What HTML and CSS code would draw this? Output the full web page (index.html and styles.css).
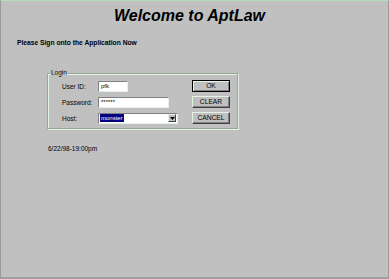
FILE: index.html
```html
<!DOCTYPE html>
<html lang="en">
  <head>
    <meta charset="UTF-8" />
    <title>Welcome to AptLaw</title>
    <link rel="stylesheet" href="styles.css">
  </head>
  <body>
    <div class="screen">
      <h1 class="title">Welcome to AptLaw</h1>
      <p class="prompt">Please Sign onto the Application Now</p>

      <fieldset class="login">
        <legend>Login</legend>
        <div class="login-grid">
          <label>User ID:</label>
          <span class="field field-user">pfk</span>
          <span class="btn btn-default">OK</span>

          <label>Password:</label>
          <span class="field field-pass">******</span>
          <span class="btn">CLEAR</span>

          <label>Host:</label>
          <span class="field combo">
            <span class="combo-value">monster</span>
            <span class="combo-arrow">
              <svg width="5" height="3" viewBox="0 0 5 3"><path d="M0 0h5L2.5 3z" fill="#000"/></svg>
            </span>
          </span>
          <span class="btn">CANCEL</span>
        </div>
      </fieldset>

      <p class="stamp">6/22/98-19:00pm</p>
    </div>
  </body>
</html>
```

FILE: styles.css
```css
* {
  box-sizing: border-box;
  margin: 0;
  padding: 0;
}

body {
  background: #c0c0c0;
  font-family: "Liberation Sans", Arial, sans-serif;
  color: #000;
}

.screen {
  width: 389px;
  height: 279px;
  background: #c0c0c0;
  border-top: 1px solid #b4dcb4;
  border-left: 1px solid #9a9a9a;
  border-right: 1px solid #9a9a9a;
  border-bottom: 2px solid #a0a0a0;
  padding-top: 6px;
}

.title {
  font-size: 16px;
  line-height: 18px;
  font-weight: bold;
  font-style: italic;
  text-align: center;
  padding-right: 10px;
}

.prompt {
  margin: 14px 0 0 16px;
  font-size: 6.7px;
  line-height: 8px;
  font-weight: bold;
}

.login {
  margin: 22px 0 0 46px;
  width: 191px;
  padding: 3px 0 4px 0;
  border: 1px solid #98a898;
  box-shadow: 1px 1px 0 #e4f2e4, inset 1px 1px 0 #e4f2e4;
}

.login legend {
  margin-left: 2px;
  padding: 0 1px;
  font-size: 6.5px;
  line-height: 8px;
}

.login-grid {
  display: grid;
  grid-template-columns: 36px 94px 38px;
  grid-auto-rows: 12px;
  row-gap: 4px;
  align-items: center;
  margin-left: 14px;
  font-size: 6.5px;
}

.field {
  height: 11px;
  background: #fff;
  border-top: 1px solid #808080;
  border-left: 1px solid #808080;
  border-right: 1px solid #e4f2e4;
  border-bottom: 1px solid #e4f2e4;
  line-height: 9px;
  padding-left: 2px;
  font-size: 6px;
}

.field-user {
  width: 30px;
}

.field-pass {
  width: 71px;
}

.combo {
  width: 80px;
  display: flex;
  align-items: center;
  justify-content: space-between;
  padding: 0 1px;
}

.combo-value {
  background: #000080;
  color: #fff;
  padding: 0 1px;
  line-height: 8px;
}

.combo-arrow {
  width: 8px;
  height: 8px;
  background: #c0c0c0;
  border-top: 1px solid #e4f2e4;
  border-left: 1px solid #e4f2e4;
  border-right: 1px solid #404040;
  border-bottom: 1px solid #404040;
  display: flex;
  align-items: center;
  justify-content: center;
}

.btn {
  height: 12px;
  background: #c0c0c0;
  border-top: 1px solid #e4f2e4;
  border-left: 1px solid #e4f2e4;
  border-right: 1px solid #404040;
  border-bottom: 1px solid #404040;
  box-shadow: inset -1px -1px 0 #808080;
  text-align: center;
  line-height: 10px;
  font-size: 6.7px;
}

.btn-default {
  border: 1px solid #000;
  box-shadow: inset 1px 1px 0 #e4f2e4, inset -1px -1px 0 #808080;
}

.stamp {
  margin: 16px 0 0 47px;
  font-size: 6.5px;
  line-height: 8px;
}
```
